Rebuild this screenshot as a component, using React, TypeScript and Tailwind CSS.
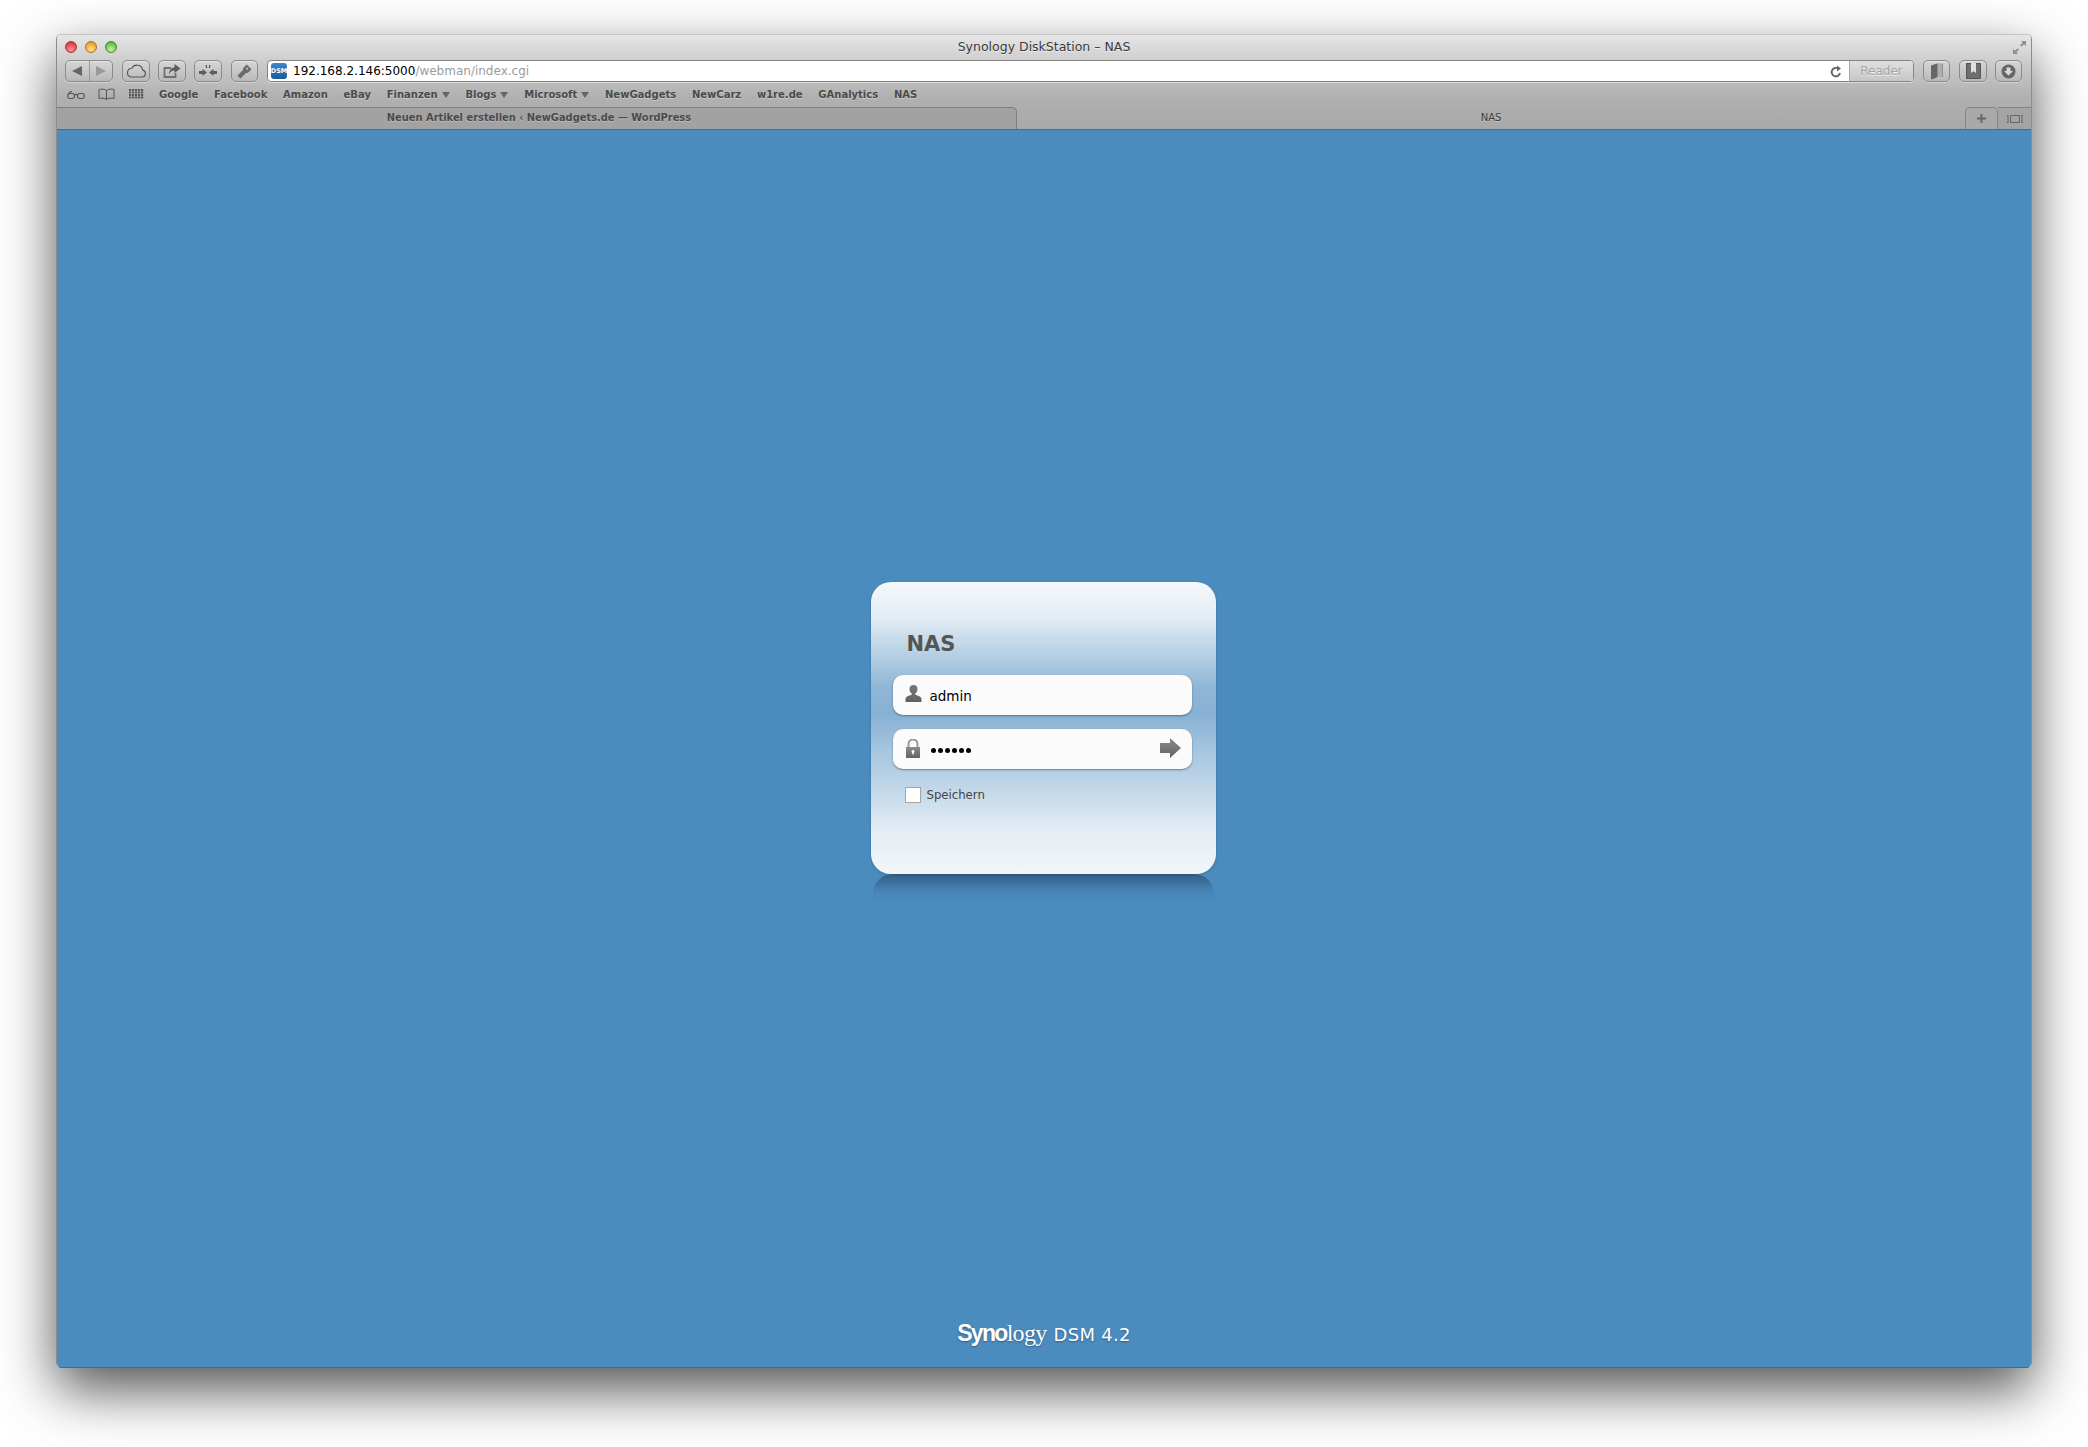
import React from "react";

const ui = "font-['DejaVu_Sans',sans-serif]";

function ToolBtn({ w, children }: { w: string; children: React.ReactNode }) {
  return (
    <div className={`${w} h-[22px] rounded-[5px] border border-[#8b8b8b] bg-[linear-gradient(#d6d6d6,#b9b9b9)] shadow-[0_1px_0_rgba(255,255,255,0.35),inset_0_1px_0_rgba(255,255,255,0.35)] flex items-center justify-center shrink-0`}>
      {children}
    </div>
  );
}

function Bookmark({ label, menu }: { label: string; menu?: boolean }) {
  return (
    <span className="flex items-center gap-[4px] text-[10px] font-bold text-[#4a4a4a] [text-shadow:0_1px_0_rgba(255,255,255,0.35)] leading-none whitespace-nowrap">
      {label}
      {menu && (
        <svg width="8" height="6" viewBox="0 0 8 6"><path d="M0 0h8L4 6z" fill="#666" /></svg>
      )}
    </span>
  );
}

export default function App() {
  return (
    <div className={`h-[1447px] bg-white pt-[34px] px-[56px] pb-[79px] overflow-hidden ${ui}`}>
      <div className="h-full rounded-[5px] flex flex-col overflow-hidden shadow-[0_22px_55px_rgba(0,0,0,0.68)] border-x border-[#8c8c8c]">
        {/* chrome */}
        <div className="bg-[linear-gradient(#e6e6e6,#c9c9c9_32%,#b0b0b0_66%,#a8a8a8)] border-t border-[#c4c4c4]">
          {/* title bar */}
          <div className="h-[24px] flex items-center relative pl-[8px]">
            <div className="flex items-center gap-[8px] w-[52px]">
              <span className="w-[12px] h-[12px] shrink-0 rounded-full border border-[#a23a3a] bg-[radial-gradient(circle_at_50%_75%,#ff9a9a,#e8404a_65%,#b92a30)]" />
              <span className="w-[12px] h-[12px] shrink-0 rounded-full border border-[#a8762a] bg-[radial-gradient(circle_at_50%_75%,#ffe08a,#f0a83c_65%,#c27f22)]" />
              <span className="w-[12px] h-[12px] shrink-0 rounded-full border border-[#4c8a3a] bg-[radial-gradient(circle_at_50%_75%,#c8f2a0,#6cc04e_65%,#4b9636)]" />
            </div>
            <span className="flex-1 text-center text-[12.5px] text-[#3a3a3a] [text-shadow:0_1px_0_rgba(255,255,255,0.5)] pr-[60px] pt-px">Synology DiskStation – NAS</span>
            <svg width="15" height="15" viewBox="0 0 15 15" className="absolute right-[4px] top-[5px]">
              <path d="M9 1h5v5l-2-1.800L9.500 6.800 8 5.300l2.600-2.600zM6 14H1V9l2 1.800L5.500 8.200 7 9.700l-2.600 2.600z" fill="#8f8f8f" />
            </svg>
          </div>
          {/* toolbar */}
          <div className="h-[24px] flex items-start pl-[8px] pr-[9px] pt-px">
            <ToolBtn w="w-[48px]">
              <div className="flex items-center w-full h-full">
                <div className="flex-1 flex justify-center border-r border-[#9a9a9a] h-full items-center">
                  <svg width="10" height="10" viewBox="0 0 10 10"><path d="M0 5 10 0v10z" fill="#666" /></svg>
                </div>
                <div className="flex-1 flex justify-center items-center">
                  <svg width="10" height="10" viewBox="0 0 10 10"><path d="M10 5 0 0v10z" fill="#999" /></svg>
                </div>
              </div>
            </ToolBtn>
            <div className="w-[9px]" />
            <ToolBtn w="w-[28px]">
              <svg width="21" height="14" viewBox="0 0 21 14"><path d="M5 13h11a3.500 3.500 0 0 0 .7-6.900A5.800 5.800 0 0 0 5.800 4.300 4.400 4.400 0 0 0 5 13z" fill="none" stroke="#555" strokeWidth="1.100" /></svg>
            </ToolBtn>
            <div className="w-[8px]" />
            <ToolBtn w="w-[28px]">
              <svg width="18" height="14" viewBox="0 0 18 14"><path d="M8 4H1.500v9h11V9" fill="none" stroke="#707070" strokeWidth="1.800" /><path d="M11.500 0 17.500 4.500 11.500 9V6.500C9 6.500 7.500 7.500 6 10c.3-4 2.500-6.500 5.500-6.800z" fill="#5c5c5c" /></svg>
            </ToolBtn>
            <div className="w-[8px]" />
            <ToolBtn w="w-[28px]">
              <svg width="18" height="12" viewBox="0 0 18 12" fill="#5c5c5c"><path d="M0 6h3.500V4L8 7.500 3.500 11V9H0zM18 6h-3.500V4L10 7.500l4.500 3.500V9H18z" /><path d="M6.500 0h1.500v1.500l.5 1.500H7zM10 0h1.500l-.5 3H9.500l.5-1.500z" /></svg>
            </ToolBtn>
            <div className="w-[9px]" />
            <ToolBtn w="w-[27px]">
              <svg width="15" height="15" viewBox="0 0 15 15"><path d="M9.800.5 14.500 5.200 11 8.700a3 3 0 0 1-2 .3L3.500 14.500.5 11.500 6 6a3 3 0 0 1 .3-2z" fill="#6a6a6a" /><circle cx="10.200" cy="4.800" r="1" fill="#c8c8c8" /></svg>
            </ToolBtn>
            <div className="w-[9px]" />
            {/* address bar */}
            <div className="flex-1 h-[22px] flex rounded-[4px] border border-[#858585] overflow-hidden bg-white shadow-[0_1px_0_rgba(255,255,255,0.45)]">
              <div className="flex-1 flex items-center pl-[3px] pr-[7px]">
                <span className="w-[16px] h-[16px] rounded-[3px] bg-[linear-gradient(#3e87c8,#1b5a9b)] text-white text-[6.5px] font-bold flex items-center justify-center leading-none shrink-0">DSM</span>
                <span className="ml-[6px] text-[12px] text-black leading-none whitespace-nowrap">192.168.2.146:5000<span className="text-[#9b9b9b]">/webman/index.cgi</span></span>
                <span className="flex-1" />
                <svg width="12" height="13" viewBox="0 0 12 13"><path d="M10 8a4.200 4.200 0 1 1-1.500-4.200" fill="none" stroke="#666" strokeWidth="1.900" /><path d="M7 .5v6l4-3z" fill="#666" /></svg>
              </div>
              <div className="w-[64px] bg-[linear-gradient(#e0e0e0,#c6c6c6)] border-l border-[#a9a9a9] flex items-center justify-center text-[12px] text-[#a5a5a5] [text-shadow:0_1px_0_rgba(255,255,255,0.7)]">Reader</div>
            </div>
            <div className="w-[9px]" />
            <ToolBtn w="w-[27px]">
              <svg width="14" height="17" viewBox="0 0 14 17"><path d="M1 2.500 7 .5v14l-6 2z" fill="#666" /><path d="M7 .5h6v13.500H7z" fill="#8f8f8f" /><path d="M9 .5V14M11 .5V14" stroke="#dcdcdc" strokeWidth=".8" /></svg>
            </ToolBtn>
            <div className="w-[9px]" />
            <ToolBtn w="w-[28px]">
              <svg width="17" height="16" viewBox="0 0 17 16"><path d="M1.500.5h14v15h-14z" fill="#6e6e6e" stroke="#555" /><path d="M6 0h5v10l-2.500-1.800L6 10z" fill="#e0e0e0" /></svg>
            </ToolBtn>
            <div className="w-[8px]" />
            <ToolBtn w="w-[27px]">
              <svg width="15" height="15" viewBox="0 0 15 15"><circle cx="7.500" cy="7.500" r="7" fill="#666" /><path d="M5.500 3.500h4V7H12l-4.500 4.500L3 7h2.500z" fill="#d8d8d8" /></svg>
            </ToolBtn>
          </div>
          {/* bookmarks */}
          <div className="h-[24px] flex items-center pl-[10px] pb-[2px]">
            <svg width="18" height="9" viewBox="0 0 18 9" fill="none" stroke="#555" strokeWidth="1.100"><rect x=".6" y="3.500" width="7" height="5" rx="2.500" /><rect x="10.400" y="3.500" width="7" height="5" rx="2.500" /><path d="M7.500 5c1-.8 2-.8 3 0M1 4.500C2 2.500 3 1.500 5 1.200" /></svg>
            <svg width="17" height="12" viewBox="0 0 17 12" className="ml-[13px]" fill="none" stroke="#555" strokeWidth="1"><path d="M8.500 2.500C7 1 3 .8 1 1.500v9c2-.6 6-.5 7.500 1 1.500-1.500 5.500-1.600 7.500-1v-9c-2-.7-6-.5-7.500 1zm0 0v9" /></svg>
            <svg width="15" height="11" viewBox="0 0 15 11" className="ml-[14px]" fill="#555">
              {[0, 2.5, 5, 7.5].map((y) => [0, 3, 6, 9, 12].map((x) => <rect key={`${x}-${y}`} x={x} y={y} width="2.200" height="1.900" />))}
            </svg>
            <div className="ml-[15px] flex items-center gap-[15.75px] pt-px">
              <Bookmark label="Google" />
              <Bookmark label="Facebook" />
              <Bookmark label="Amazon" />
              <Bookmark label="eBay" />
              <Bookmark label="Finanzen" menu />
              <Bookmark label="Blogs" menu />
              <Bookmark label="Microsoft" menu />
              <Bookmark label="NewGadgets" />
              <Bookmark label="NewCarz" />
              <Bookmark label="w1re.de" />
              <Bookmark label="GAnalytics" />
              <Bookmark label="NAS" />
            </div>
          </div>
          {/* tabs */}
          <div className="h-[23px] flex text-[10px] font-bold text-[#4a4a4a] [text-shadow:0_1px_0_rgba(255,255,255,0.3)] border-b border-[#666]">
            <div className="w-[960px] bg-[#a2a2a2] border-t border-r border-[#7f7f7f] rounded-tr-[5px] flex items-center justify-center leading-none pb-px pl-[5px]">
              <span className="text-[9.9px]">Neuen Artikel erstellen ‹ NewGadgets.de — WordPress</span>
            </div>
            <div className="flex-1 flex items-center justify-center font-normal text-[#3c3c3c] leading-none pb-px">NAS</div>
            <div className="w-[33px] bg-[#a9a9a9] border-t border-x border-[#858585] rounded-t-[5px] flex items-center justify-center">
              <svg width="9" height="9" viewBox="0 0 9 9"><path d="M3.500 0h2v3.500H9v2H5.500V9h-2V5.500H0v-2h3.500z" fill="#666" /></svg>
            </div>
            <div className="w-[33px] bg-[#a4a4a4] border-t border-[#858585] flex items-center justify-center">
              <svg width="16" height="8" viewBox="0 0 16 8" fill="none" stroke="#666"><path d="M3.500.5h9v7h-9zM0 .5h1.500M0 7.500h1.500M14.500.5H16M14.500 7.500H16M1 .5v7M15 .5v7" /></svg>
            </div>
          </div>
        </div>
        {/* page */}
        <div className="flex-1 bg-[#4b8cbf] flex flex-col items-center pt-[452px] pb-[22px] border-b border-[#5b6670]">
          <div className="w-[345px] -translate-x-px flex flex-col">
            <div className="h-[292px] rounded-[20px] pl-[22px] pr-[24px] pt-[50px] bg-[linear-gradient(#f5f8fb,#e3edf4_12%,#b9d1e4_24%,#8fb6d6_36%,#87b0d3_45%,#a7c6df_58%,#c0d6e8_70%,#e5eef5_86%,#f3f6f9)] shadow-[0_1px_3px_rgba(30,60,90,0.3)]">
              <div className="pl-[14px] text-[21px] font-bold text-[#555] leading-[25px]">NAS</div>
              <div className="mt-[18px] h-[40px] rounded-[10px] bg-[#fbfbfb] shadow-[0_1px_2px_rgba(40,60,80,0.55)] flex items-center pl-[12px]">
                <svg width="17" height="17" viewBox="0 0 17 17" className="mb-[3px]"><defs><linearGradient id="g1" x1="0" y1="0" x2="0" y2="1"><stop offset="0" stopColor="#777" /><stop offset="1" stopColor="#5f6266" /></linearGradient></defs><path d="M8.500 0a4 4 0 0 1 4 4c0 2-1 3.600-2.200 4.500v1.200c2.500.7 6.200 2 6.200 4.300V17H.5v-3c0-2.300 3.700-3.600 6.200-4.300V8.500C5.500 7.600 4.500 6 4.500 4a4 4 0 0 1 4-4z" fill="url(#g1)" /></svg>
                <span className="ml-[8px] mt-[4px] text-[13.5px] text-black leading-none">admin</span>
              </div>
              <div className="mt-[14px] h-[40px] rounded-[10px] bg-[#fbfbfb] shadow-[0_1px_2px_rgba(40,60,80,0.55)] flex items-center pl-[12px] pr-[11px]">
                <svg width="16" height="19" viewBox="0 0 16 19" className="mb-[1px]"><defs><linearGradient id="g2" x1="0" y1="0" x2="0" y2="1"><stop offset="0" stopColor="#8c8c8c" /><stop offset="1" stopColor="#5f6266" /></linearGradient></defs><path d="M3.500 8V5a4.500 4.500 0 0 1 9 0v3" fill="none" stroke="#9a9a9a" strokeWidth="2" /><path d="M1 8h14v11H1z" fill="url(#g2)" /><circle cx="8" cy="12.500" r="1.400" fill="#fff" /><path d="M7.300 13h1.400v2.500H7.300z" fill="#fff" /></svg>
                <span className="ml-[10px] flex gap-[2px] mt-[2px]">
                  {[0, 1, 2, 3, 4, 5].map((i) => (<span key={i} className="w-[5px] h-[5px] rounded-full bg-black" />))}
                </span>
                <span className="flex-1" />
                <svg width="21" height="20" viewBox="0 0 21 20" className="mb-[2px]"><defs><linearGradient id="g3" x1="0" y1="0" x2="0" y2="1"><stop offset="0" stopColor="#8a8a8a" /><stop offset="1" stopColor="#606368" /></linearGradient></defs><path d="M0 5h10V0l11 10-11 10v-5H0z" fill="url(#g3)" /></svg>
              </div>
              <div className="mt-[18px] flex items-center pl-[12px]">
                <span className="w-[16px] h-[16px] bg-white border border-[#a5a5a5]" />
                <span className="ml-[6px] mt-[1px] text-[11.7px] text-[#444] leading-none">Speichern</span>
              </div>
            </div>
            <div className="h-[27px] mx-[2px] rounded-t-[20px] bg-[linear-gradient(rgba(35,65,95,0.6),rgba(60,110,155,0.25)_65%,rgba(75,140,191,0))]" />
          </div>
          <div className="mt-auto flex items-baseline text-white leading-none [text-shadow:0_1px_2px_rgba(0,0,0,0.35)]">
            <span className="font-['Liberation_Sans',sans-serif] font-bold text-[23px] tracking-[-1.7px]">Syno</span>
            <span className="font-['Liberation_Serif',serif] text-[24px] tracking-[-0.7px]">logy</span>
            <span className="ml-[7px] text-[18px] tracking-[0.3px]">DSM 4.2</span>
          </div>
        </div>
      </div>
    </div>
  );
}
